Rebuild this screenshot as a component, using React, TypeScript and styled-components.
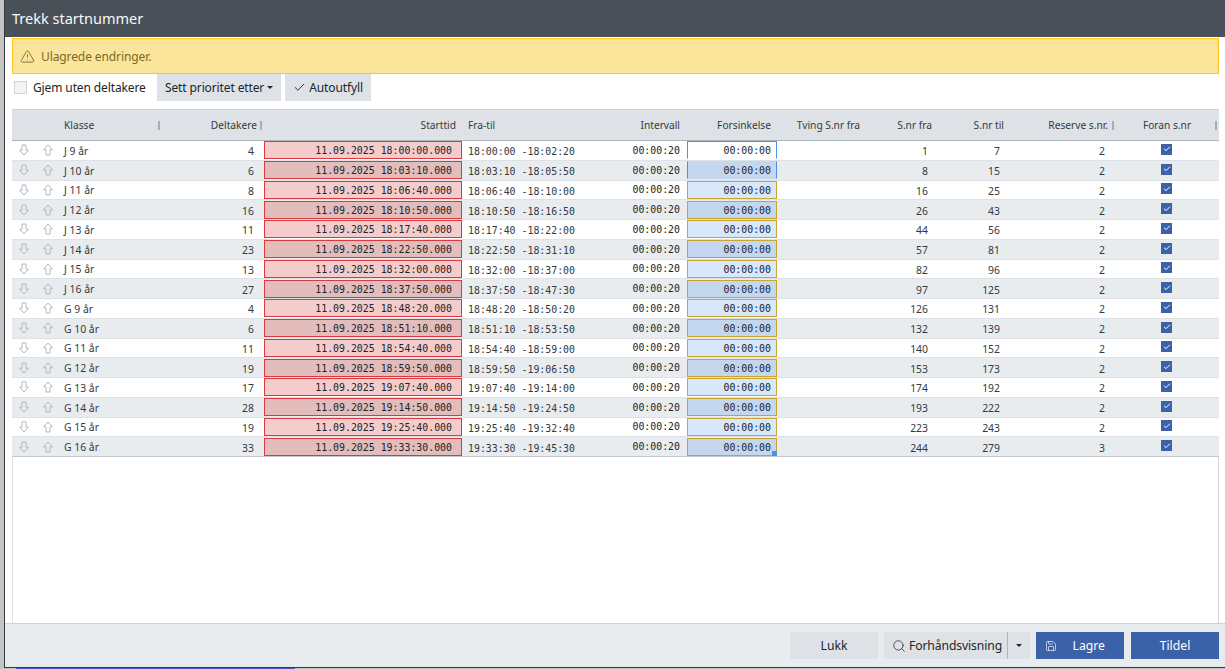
import React from "react";
import styled, { createGlobalStyle } from "styled-components";
import { AlertTriangle, Check, Search, Save } from "lucide-react";

const Global = createGlobalStyle`
  html, body { margin: 0; padding: 0; height: 100%; overflow: hidden; background: #c4c4c4; }
  #root { height: 100%; }
  * { box-sizing: border-box; }
`;

const Screen = styled.div`
  width: 1225px;
  height: 669px;
  padding-left: 4px;
  padding-bottom: 1px;
  background: linear-gradient(to right, transparent 16px, #4a5cc0 16px, #4a5cc0 295px, transparent 295px);
  font-family: "Noto Sans", "Open Sans", sans-serif;
  color: #212529;
`;

const Dialog = styled.div`
  height: 668px;
  display: flex;
  flex-direction: column;
  background: #fff;
  border-left: 1px solid #343a40;
  border-bottom: 1px solid #343a40;
`;

const TitleBar = styled.div`
  height: 37px;
  flex: none;
  background: #495057;
  color: #f8f9fa;
  font-size: 14.5px;
  line-height: 37px;
  padding-left: 7px;
`;

const Body = styled.div`
  flex: 1;
  min-height: 0;
  display: flex;
  flex-direction: column;
  padding: 1px 6px 0 7px;
`;

const Alert = styled.div`
  height: 36px;
  flex: none;
  display: flex;
  align-items: center;
  gap: 6px;
  padding-left: 7px;
  background: #fbe59a;
  border: 1px solid #ffc71f;
  color: #7a6a24;
  font-size: 12px;
  letter-spacing: -0.1px;
`;

const Toolbar = styled.div`
  height: 27px;
  flex: none;
  display: flex;
  align-items: flex-start;
  margin-bottom: 8px;
`;

const HideLabel = styled.label`
  display: flex;
  align-items: center;
  gap: 6px;
  height: 26px;
  width: 145px;
  padding-left: 2px;
  font-size: 12px;
  letter-spacing: -0.12px;
`;

const EmptyBox = styled.span`
  width: 13px;
  height: 13px;
  background: #f1f3f5;
  border: 1px solid #ced4da;
`;

const ToolButton = styled.button`
  height: 27px;
  margin-right: 4px;
  padding: 0 8px;
  border: 0;
  background: #dee2e6;
  color: #212529;
  font: 12px "Noto Sans", sans-serif;
  letter-spacing: -0.12px;
  display: flex;
  align-items: center;
  gap: 3px;
`;

const Caret = styled.span`
  width: 0;
  height: 0;
  border-left: 3px solid transparent;
  border-right: 3px solid transparent;
  border-top: 3px solid #212529;
`;

const TableArea = styled.div`
  flex: 1;
  min-height: 0;
  border-left: 1px solid #dee2e6;
  border-right: 1px solid #d4d8dc;
`;

const Grid = "46px 103px 103px 199px 137px 87px 91px 88px 72px 72px 105px 104px";

const HeaderRow = styled.div`
  height: 32px;
  margin: 0 -1px;
  display: grid;
  grid-template-columns: ${Grid};
  align-items: center;
  background: #dee2e6;
  border-top: 1px solid #d0d4d8;
  border-bottom: 1px solid #adb5bd;
  font-size: 10.2px;
  color: #343a40;
`;

const HeaderCell = styled.div<{ $align?: string; $grip?: number; $pad?: number }>`
  position: relative;
  text-align: ${(p) => p.$align || "right"};
  padding: 0 ${(p) => p.$pad ?? 6}px;
  white-space: nowrap;
  ${(p) =>
    p.$grip !== undefined
      ? `&::after { content: ""; position: absolute; right: ${p.$grip}px; top: 3px; width: 2px; height: 9px; background: #a6aeb6; }`
      : ""}
`;

const Row = styled.div<{ $odd: boolean }>`
  height: 19.75px;
  margin: 0 -1px;
  display: grid;
  grid-template-columns: ${Grid};
  align-items: center;
  background: ${(p) => (p.$odd ? "#e9ecef" : "#fff")};
  border-bottom: 1px solid #dee2e6;
  font-size: 10.4px;
  color: #343a40;
  &:last-child {
    border-bottom-color: #c4c8cc;
  }
`;

const ArrowCell = styled.div`
  display: flex;
  gap: 12px;
  padding-left: 6px;
  color: #b4b8bc;
`;

const TextCell = styled.div`
  padding: 1px 6px 0;
  white-space: nowrap;
`;

const NumCell = styled.div`
  text-align: right;
  padding: 2px 10px 0 0;
`;

const Mono = styled.div`
  font-family: "DejaVu Sans Mono", monospace;
  font-size: 9.9px;
  color: #212529;
  white-space: nowrap;
`;

const StartCell = styled(Mono)<{ $odd: boolean }>`
  height: 18px;
  margin-right: 1px;
  padding-right: 9px;
  text-align: right;
  line-height: 17px;
  background: ${(p) => (p.$odd ? "#e3bcbc" : "#f5cccc")};
  border: 1px solid #d9393f;
`;

const RangeCell = styled(Mono)`
  padding-left: 5px;
  padding-top: 3px;
  color: #343a40;
`;

const IntervalCell = styled(Mono)`
  text-align: right;
  padding-right: 7px;
`;

const delayBorder = (i: number) => {
  if (i === 0) return "border-color: #4f8fe6 #4f8fe6 transparent #4f8fe6;";
  if (i === 1) return "border-color: transparent #4f8fe6 transparent #4f8fe6;";
  return "border-color: #c9a52f;";
};

const DelayCell = styled(Mono)<{ $odd: boolean; $index: number }>`
  position: relative;
  height: 18px;
  margin-right: 1px;
  line-height: 17px;
  text-align: right;
  padding-right: 5px;
  background: ${(p) => (p.$odd ? "#c5d7ef" : p.$index === 0 ? "#fff" : "#d9e7fb")};
  border: 1px solid;
  ${(p) => delayBorder(p.$index)}
`;

const Handle = styled.span`
  position: absolute;
  right: -1px;
  bottom: -1px;
  width: 5px;
  height: 5px;
  background: #4f8fe6;
`;

const CheckCell = styled.div`
  display: flex;
  justify-content: center;
  padding-right: 1px;
`;

const CheckBox = styled.span`
  width: 11px;
  height: 11px;
  margin-top: -2px;
  background: #3b62a8;
  color: #fff;
  display: flex;
  align-items: center;
  justify-content: center;
`;

const Footer = styled.div`
  height: 44px;
  flex: none;
  display: flex;
  justify-content: flex-end;
  align-items: center;
  padding-right: 6px;
  background: #e9ecef;
  border-top: 1px solid #ced4da;
`;

const FootButton = styled.button<{ $primary?: boolean; $w: number; $gap?: number }>`
  width: ${(p) => p.$w}px;
  height: 27px;
  margin-right: ${(p) => p.$gap ?? 0}px;
  border: 0;
  padding: 0 8px;
  background: ${(p) => (p.$primary ? "#3b62a8" : "#dee2e6")};
  color: ${(p) => (p.$primary ? "#fff" : "#212529")};
  font: 12.2px "Noto Sans", sans-serif;
  display: flex;
  align-items: center;
  justify-content: center;
`;

const PreviewGroup = styled.div`
  display: flex;
  margin-right: 6px;
`;

const PreviewButton = styled(FootButton)`
  justify-content: flex-start;
  gap: 3px;
  padding: 0 0 0 8px;
  letter-spacing: -0.12px;
  border-right: 1px solid #adb5bd;
`;

const SaveIcon = styled(Save)`
  margin-right: auto;
  margin-left: 1px;
`;

const SaveLabel = styled.span`
  margin-right: 11px;
`;

const BlockArrow = ({ up }: { up?: boolean }) => (
  <svg width="12" height="12" viewBox="0 0 12 12" fill="none" stroke="currentColor" strokeWidth="1" strokeLinejoin="round">
    <path
      d="M6 1 L10.5 5.8 H8 V11 H4 V5.8 H1.5 Z"
      transform={up ? undefined : "rotate(180 6 6)"}
    />
  </svg>
);

const rows: [string, number, string, string, string, number, number, number][] = [
  ["J 9 år", 4, "18:00:00.000", "18:00:00", "18:02:20", 1, 7, 2],
  ["J 10 år", 6, "18:03:10.000", "18:03:10", "18:05:50", 8, 15, 2],
  ["J 11 år", 8, "18:06:40.000", "18:06:40", "18:10:00", 16, 25, 2],
  ["J 12 år", 16, "18:10:50.000", "18:10:50", "18:16:50", 26, 43, 2],
  ["J 13 år", 11, "18:17:40.000", "18:17:40", "18:22:00", 44, 56, 2],
  ["J 14 år", 23, "18:22:50.000", "18:22:50", "18:31:10", 57, 81, 2],
  ["J 15 år", 13, "18:32:00.000", "18:32:00", "18:37:00", 82, 96, 2],
  ["J 16 år", 27, "18:37:50.000", "18:37:50", "18:47:30", 97, 125, 2],
  ["G 9 år", 4, "18:48:20.000", "18:48:20", "18:50:20", 126, 131, 2],
  ["G 10 år", 6, "18:51:10.000", "18:51:10", "18:53:50", 132, 139, 2],
  ["G 11 år", 11, "18:54:40.000", "18:54:40", "18:59:00", 140, 152, 2],
  ["G 12 år", 19, "18:59:50.000", "18:59:50", "19:06:50", 153, 173, 2],
  ["G 13 år", 17, "19:07:40.000", "19:07:40", "19:14:00", 174, 192, 2],
  ["G 14 år", 28, "19:14:50.000", "19:14:50", "19:24:50", 193, 222, 2],
  ["G 15 år", 19, "19:25:40.000", "19:25:40", "19:32:40", 223, 243, 2],
  ["G 16 år", 33, "19:33:30.000", "19:33:30", "19:45:30", 244, 279, 3],
];

export default function App() {
  return (
    <Screen>
      <Global />
      <Dialog>
        <TitleBar>Trekk startnummer</TitleBar>
        <Body>
          <Alert>
            <AlertTriangle size={15} strokeWidth={1.2} color="#5f5430" />
            Ulagrede endringer.
          </Alert>
          <Toolbar>
            <HideLabel>
              <EmptyBox />
              Gjem uten deltakere
            </HideLabel>
            <ToolButton>
              Sett prioritet etter <Caret />
            </ToolButton>
            <ToolButton>
              <Check size={13} strokeWidth={1.7} />
              Autoutfyll
            </ToolButton>
          </Toolbar>
          <TableArea>
            <HeaderRow>
              <HeaderCell />
              <HeaderCell $align="left" $grip={1}>Klasse</HeaderCell>
              <HeaderCell $grip={2} $pad={7}>Deltakere</HeaderCell>
              <HeaderCell $pad={7}>Starttid</HeaderCell>
              <HeaderCell $align="left" $pad={5}>Fra-til</HeaderCell>
              <HeaderCell $pad={7}>Intervall</HeaderCell>
              <HeaderCell $pad={7}>Forsinkelse</HeaderCell>
              <HeaderCell>Tving S.nr fra</HeaderCell>
              <HeaderCell>S.nr fra</HeaderCell>
              <HeaderCell>S.nr til</HeaderCell>
              <HeaderCell $grip={1} $pad={7}>Reserve s.nr.</HeaderCell>
              <HeaderCell $align="center" $grip={2}>Foran s.nr</HeaderCell>
            </HeaderRow>
            {rows.map((r, i) => {
              const odd = i % 2 === 1;
              return (
                <Row key={r[0]} $odd={odd}>
                  <ArrowCell>
                    <BlockArrow />
                    <BlockArrow up />
                  </ArrowCell>
                  <TextCell>{r[0]}</TextCell>
                  <NumCell>{r[1]}</NumCell>
                  <StartCell $odd={odd}>11.09.2025 {r[2]}</StartCell>
                  <RangeCell>{r[3]} -{r[4]}</RangeCell>
                  <IntervalCell>00:00:20</IntervalCell>
                  <DelayCell $odd={odd} $index={i}>
                    00:00:00
                    {i === 15 && <Handle />}
                  </DelayCell>
                  <div />
                  <NumCell>{r[5]}</NumCell>
                  <NumCell>{r[6]}</NumCell>
                  <NumCell>{r[7]}</NumCell>
                  <CheckCell>
                    <CheckBox>
                      <Check size={8} strokeWidth={3} />
                    </CheckBox>
                  </CheckCell>
                </Row>
              );
            })}
          </TableArea>
        </Body>
        <Footer>
          <FootButton $w={88} $gap={6}>Lukk</FootButton>
          <PreviewGroup>
            <PreviewButton $w={124}>
              <Search size={14} strokeWidth={1.3} />
              Forhåndsvisning
            </PreviewButton>
            <FootButton $w={22}>
              <Caret />
            </FootButton>
          </PreviewGroup>
          <FootButton $primary $w={88} $gap={7}>
            <SaveIcon size={12} strokeWidth={1.3} />
            <SaveLabel>Lagre</SaveLabel>
          </FootButton>
          <FootButton $primary $w={88}>Tildel</FootButton>
        </Footer>
      </Dialog>
    </Screen>
  );
}
